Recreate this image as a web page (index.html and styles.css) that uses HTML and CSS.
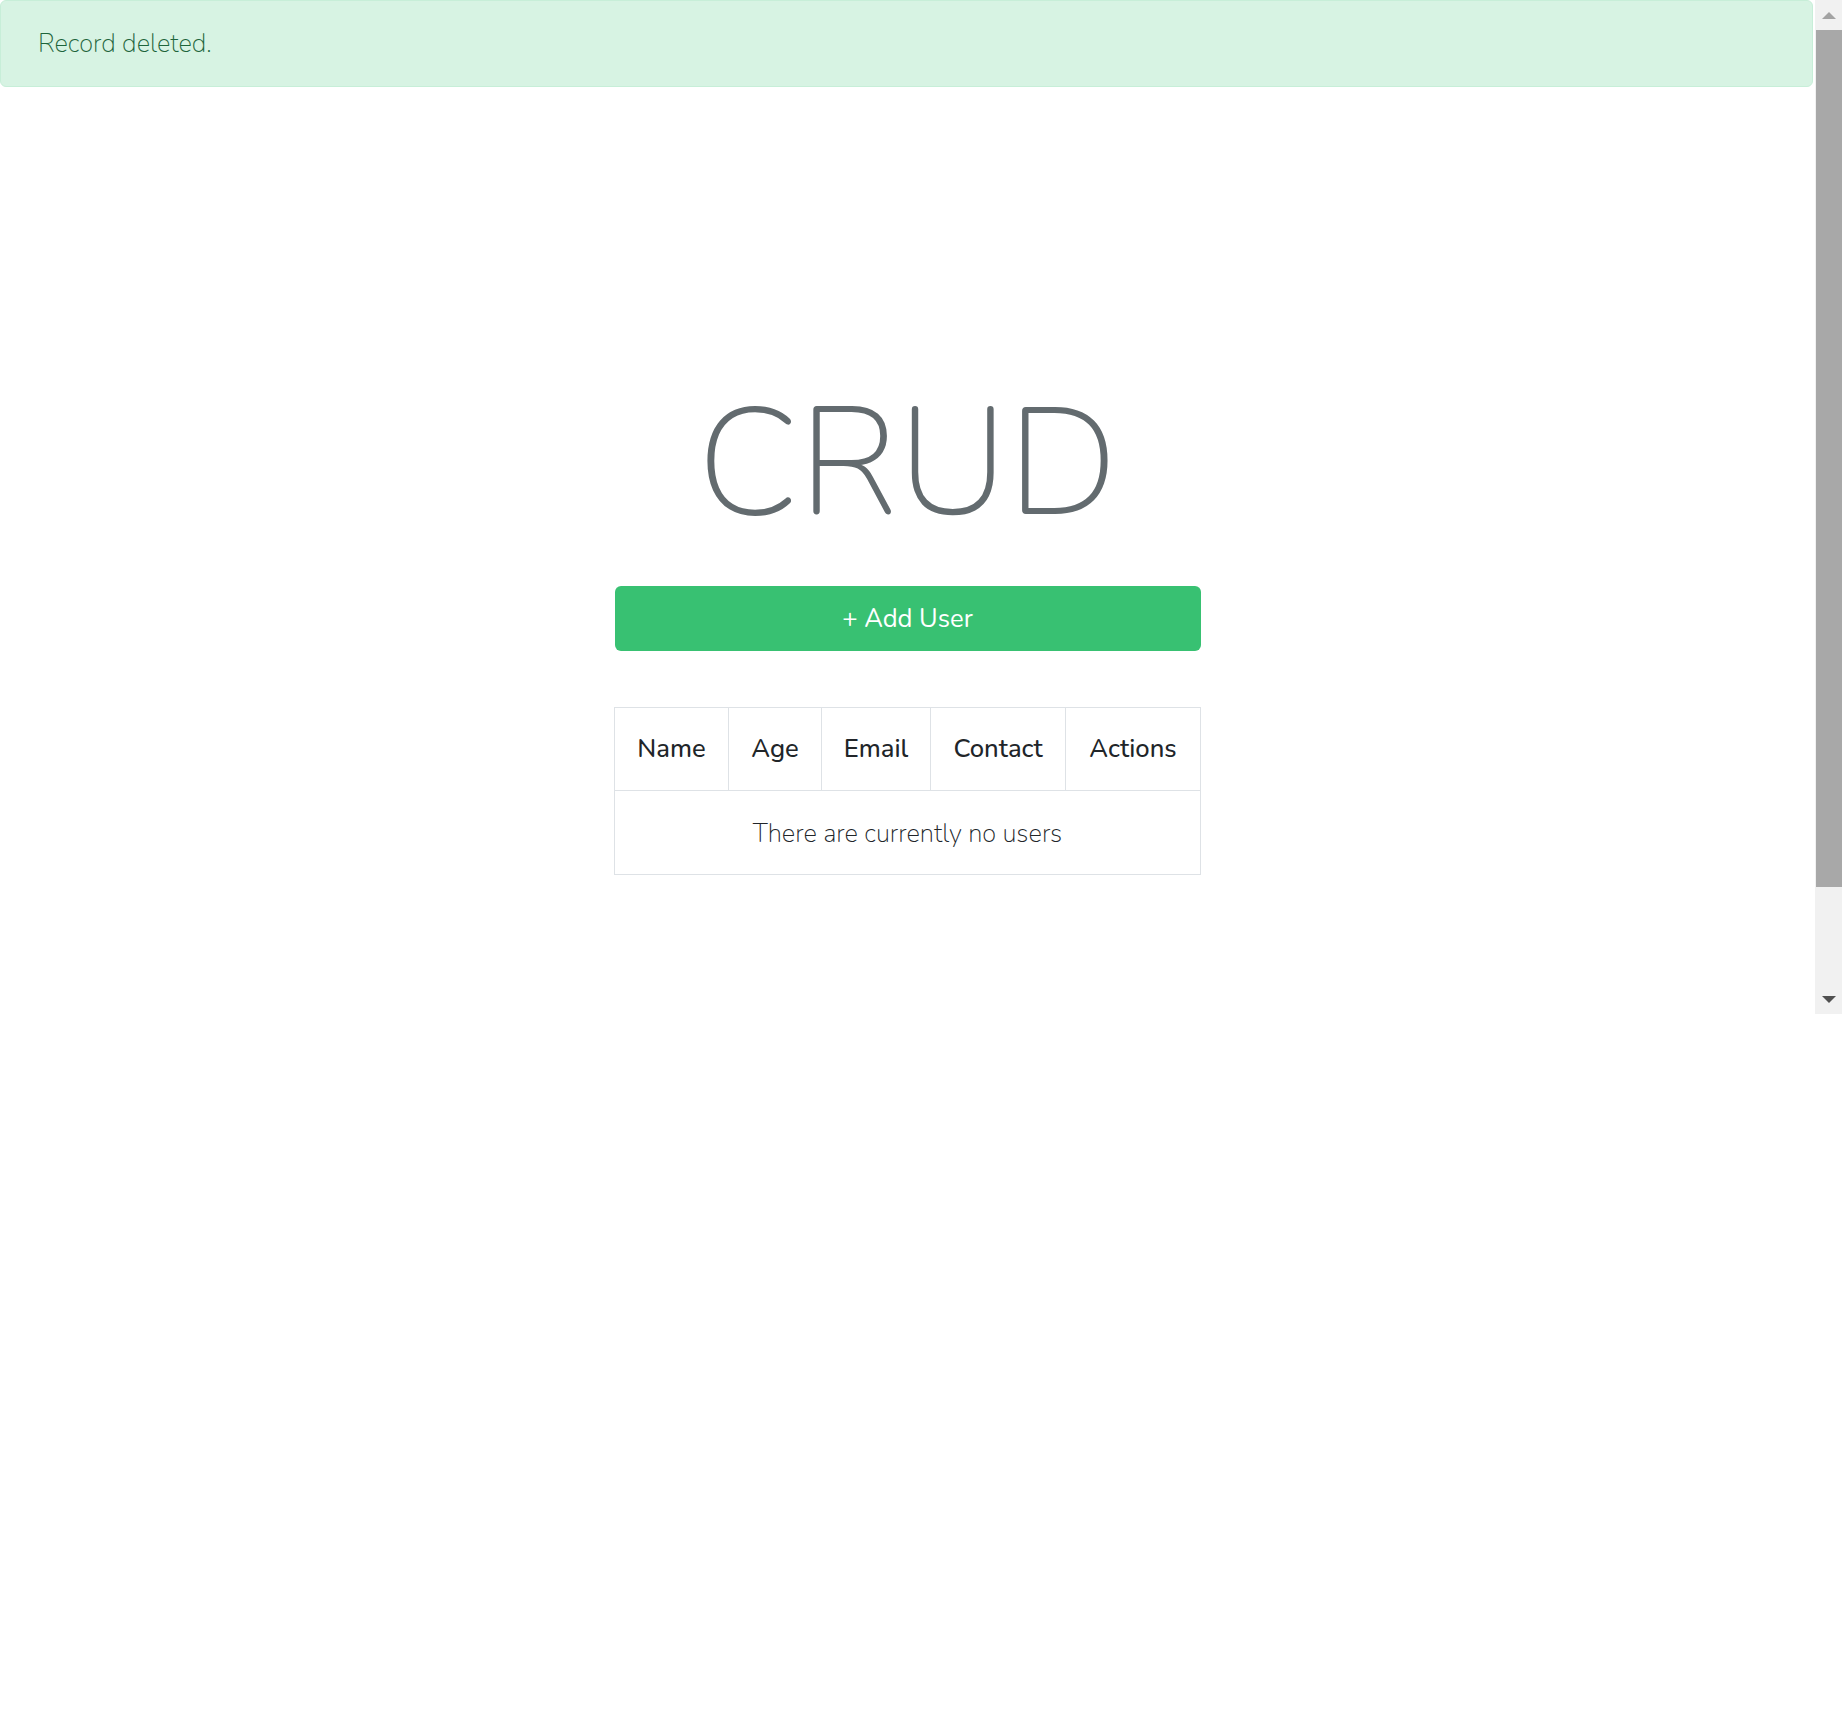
FILE: index.html
```html
<!DOCTYPE html>
<html lang="en">
<head>
<meta charset="utf-8">
<title>CRUD</title>
<link rel="stylesheet" href="styles.css">
</head>
<body>
<div class="frame">
  <div class="viewport">
    <div class="alert">Record deleted.</div>
    <main class="content">
      <h1 class="title">CRUD</h1>
      <a class="btn" href="#">+ Add User</a>
      <table class="users">
        <colgroup>
          <col class="c1"><col class="c2"><col class="c3"><col class="c4"><col class="c5">
        </colgroup>
        <thead>
          <tr><th>Name</th><th>Age</th><th>Email</th><th>Contact</th><th>Actions</th></tr>
        </thead>
        <tbody>
          <tr><td colspan="5" class="empty">There are currently no users</td></tr>
        </tbody>
      </table>
    </main>
  </div>
  <div class="scrollbar">
    <div class="sb-btn"><span class="arrow-up"></span></div>
    <div class="sb-thumb"></div>
    <div class="sb-track"></div>
    <div class="sb-btn"><span class="arrow-down"></span></div>
  </div>
</div>
</body>
</html>
```
FILE: styles.css
```css
* { box-sizing: border-box; }
html, body { margin: 0; padding: 0; background: #fff; }
body { font-family: "Nunito", "Lato", sans-serif; color: #212529; }

.frame { display: flex; height: 1014px; width: 1842px; }
.viewport { width: 1815px; height: 1014px; overflow: hidden; }

.alert {
  height: 87px;
  margin-right: 2px;
  display: flex;
  align-items: center;
  padding: 0 37px;
  background: #d7f3e3;
  border: 1px solid #c7eed8;
  border-radius: 6px;
  color: #1d643b;
  font-size: 25.6px;
  font-weight: 200;
}

.content { display: flex; flex-direction: column; align-items: center; }

.title {
  margin: 285px 0 30px;
  height: 184px;
  line-height: 184px;
  font-size: 152px;
  font-weight: 200;
  color: #636b6f;
}

.btn {
  display: block;
  width: 586px;
  height: 65px;
  line-height: 66px;
  text-align: center;
  background: #38c172;
  border-radius: 6px;
  color: #fff;
  text-decoration: none;
  font-size: 25.6px;
  font-weight: 400;
}

.users {
  margin-top: 56px;
  width: 586px;
  table-layout: fixed;
  border-collapse: collapse;
  font-size: 25.6px;
}
.users .c1 { width: 114px; }
.users .c2 { width: 93px; }
.users .c3 { width: 109px; }
.users .c4 { width: 135px; }
.users .c5 { width: 135px; }
.users th, .users td {
  border: 1px solid #dee2e6;
  padding: 0;
  height: 82px;
  line-height: 82px;
  text-align: center;
}
.users th { font-weight: 500; color: #212529; }
.users td.empty { font-weight: 200; color: #212529; height: 83px; line-height: 81px; padding-top: 2px; }

.scrollbar {
  width: 27px;
  height: 1014px;
  background: #f1f1f1;
  display: flex;
  flex-direction: column;
}
.sb-btn { height: 30px; display: flex; align-items: center; justify-content: center; }
.sb-thumb { height: 857px; margin-left: 1px; background: #a8a8a8; }
.sb-track { flex: 1; }
.arrow-up { width: 0; height: 0; border-left: 7px solid transparent; border-right: 7px solid transparent; border-bottom: 7px solid #a3a3a3; }
.arrow-down { width: 0; height: 0; border-left: 7px solid transparent; border-right: 7px solid transparent; border-top: 7px solid #505050; }
```
